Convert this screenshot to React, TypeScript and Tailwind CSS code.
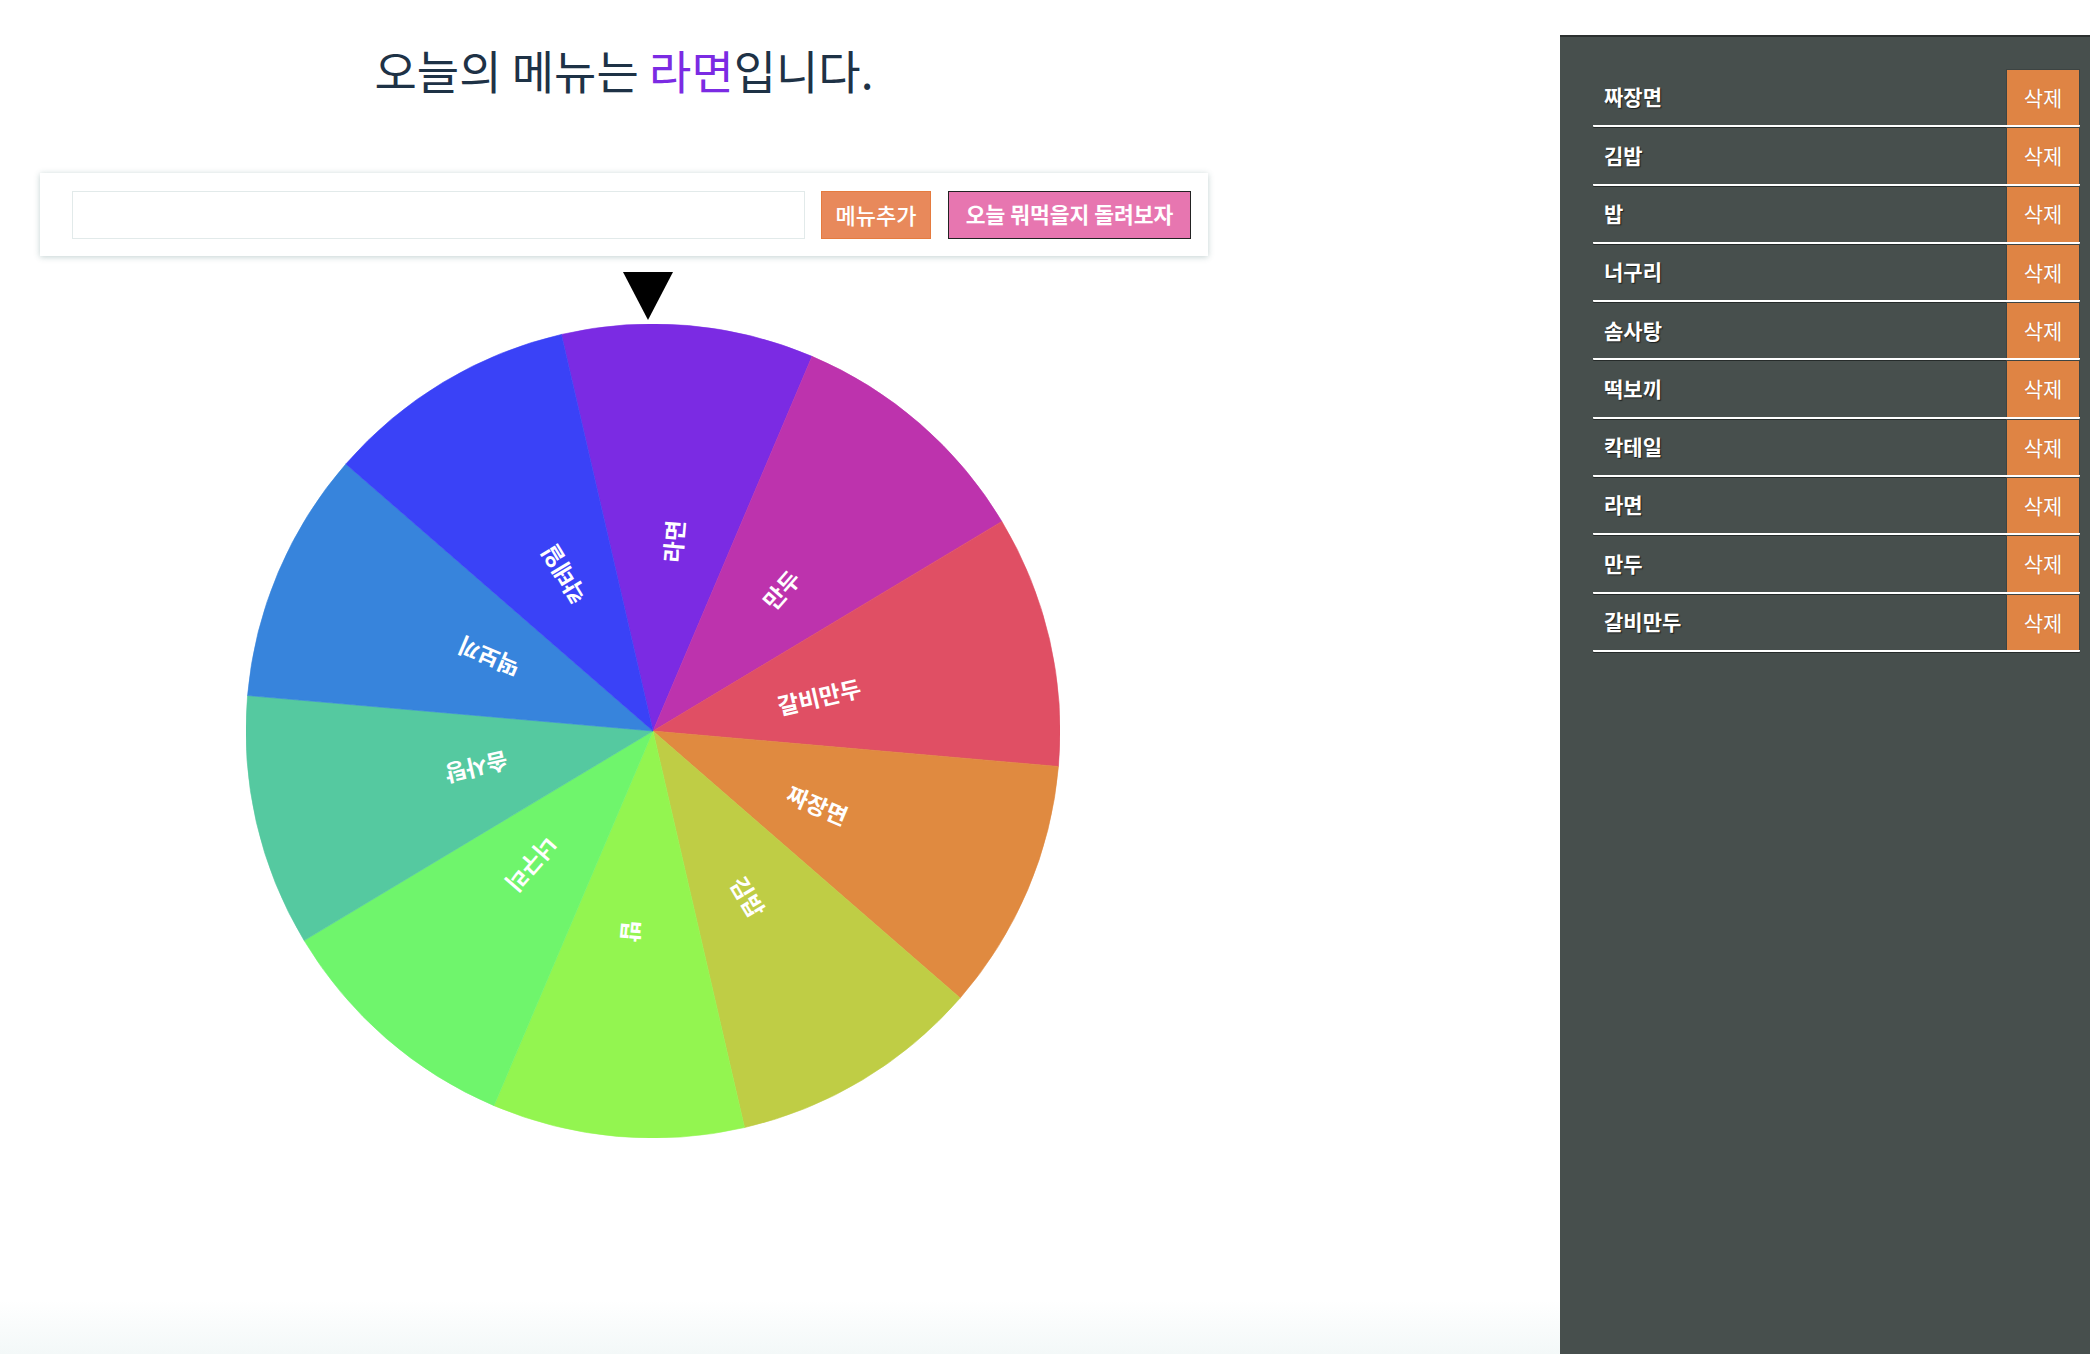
import React from "react";

const FONT = { fontFamily: '"Noto Sans CJK KR", "Noto Sans", sans-serif' };

// clockwise from the slice under the pointer
const SLICES = [
  { name: "라면", color: "#7b2be3" },
  { name: "만두", color: "#bd33ad" },
  { name: "갈비만두", color: "#e04f64" },
  { name: "짜장면", color: "#e08a40" },
  { name: "김밥", color: "#bfcd45" },
  { name: "밥", color: "#93f550" },
  { name: "너구리", color: "#6ff56c" },
  { name: "솜사탕", color: "#55c9a0" },
  { name: "떡보끼", color: "#3784dc" },
  { name: "칵테일", color: "#3a42f7" },
];

const MENU = ["짜장면", "김밥", "밥", "너구리", "솜사탕", "떡보끼", "칵테일", "라면", "만두", "갈비만두"];

const SIZE = 814;
const C = SIZE / 2;
const R = 407;
const OFFSET = -13;

function point(deg: number, r: number) {
  const a = (deg * Math.PI) / 180;
  return [C + r * Math.sin(a), C - r * Math.cos(a)];
}

function Wheel() {
  const step = 360 / SLICES.length;
  return (
    <svg width={SIZE} height={SIZE} viewBox={`0 0 ${SIZE} ${SIZE}`} className="block">
      {SLICES.map((s, i) => {
        const a0 = OFFSET + step * i;
        const a1 = a0 + step;
        const [x0, y0] = point(a0, R);
        const [x1, y1] = point(a1, R);
        return (
          <path
            key={s.name}
            d={`M ${C} ${C} L ${x0} ${y0} A ${R} ${R} 0 0 1 ${x1} ${y1} Z`}
            fill={s.color}
            stroke={s.color}
            strokeWidth={0.6}
          />
        );
      })}
      {SLICES.map((s, i) => {
        const mid = OFFSET + step * i + step / 2;
        return (
          <text
            key={s.name + "-t"}
            transform={`rotate(${mid - 90} ${C} ${C})`}
            x={C + 212}
            y={C + 7}
            textAnchor="end"
            dominantBaseline="middle"
            fill="#ffffff"
            fontSize={23}
            fontWeight={700}
            style={FONT}
          >
            {s.name}
          </text>
        );
      })}
    </svg>
  );
}

export default function App() {
  return (
    <div className="flex w-full min-h-screen bg-white" style={FONT}>
      {/* left column */}
      <div className="flex-1 min-h-screen bg-gradient-to-b from-white from-[96%] to-[#f3f8f8]">
        <div className="w-[1168px] ml-[40px] pt-[38px]">
          <h1 className="text-center text-[46px] leading-[62px] font-normal text-[#1e3246]">
            오늘의 메뉴는 <span className="text-[#7b2be3]">라면</span>입니다.
          </h1>

          <div className="mt-[73px] h-[83px] bg-white flex items-center pl-[32px] pr-[17px] gap-[16px] shadow-[0_1px_6px_rgba(40,90,90,0.28)]">
            <input
              type="text"
              className="h-[48px] w-[733px] border border-[#e2eaea] bg-white outline-none px-3"
            />
            <button className="h-[48px] w-[110px] bg-[#e8895b] border border-[#e57b3f] text-white text-[22px] font-medium">
              메뉴추가
            </button>
            <button className="h-[48px] w-[243px] ml-px bg-[#e776b0] border border-[#222] text-white text-[21.5px] font-bold">
              오늘 뭐먹을지 돌려보자
            </button>
          </div>

          <div className="mt-[16px] ml-[583px] w-0 h-0 border-l-[25px] border-r-[25px] border-t-[48px] border-l-transparent border-r-transparent border-t-black" />

          <div className="mt-[4px] ml-[206px]">
            <Wheel />
          </div>
        </div>
      </div>

      {/* menu list */}
      <aside className="w-[530px] mt-[35px] bg-[#474f4d] border-t-2 border-[#2b302f] pl-[33px] pr-[10px] pt-[32px]">
        <ul>
          {MENU.map((m) => (
            <li
              key={m}
              className="h-[58.3px] flex items-stretch justify-between border-b-2 border-white shadow-[0_1px_0_#262b2a] rounded-[1px]"
            >
              <span className="flex items-center pl-[11px] text-white text-[21px] font-bold [text-shadow:1px_1px_1px_#1a1d1c]">
                {m}
              </span>
              <button className="w-[74px] bg-[#df8444] border-x border-t border-[#3d4443] text-white text-[21px] [text-shadow:0_0_1px_#b0602a]">
                삭제
              </button>
            </li>
          ))}
        </ul>
      </aside>
    </div>
  );
}
